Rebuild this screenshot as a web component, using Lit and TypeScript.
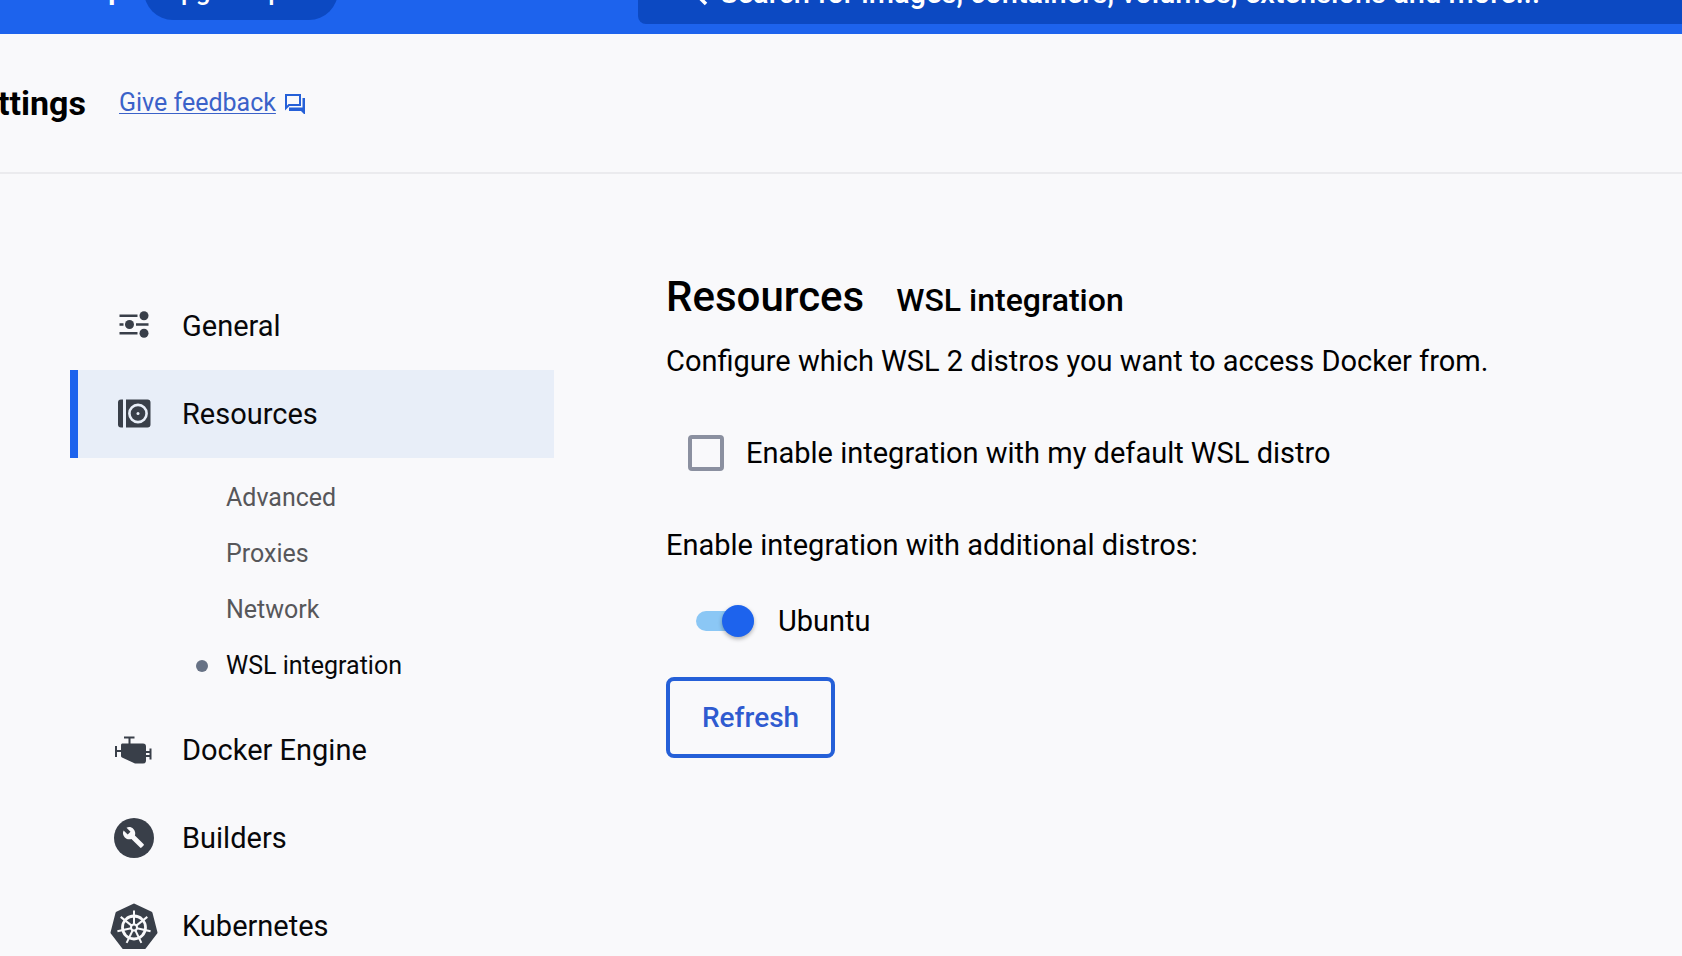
import { LitElement, html, css, svg } from "lit";
import { customElement, state } from "lit/decorators.js";

const spokes = [0, 1, 2, 3, 4, 5, 6].map((i) => (i * 360) / 7);

const icons = {
  general: svg`<svg class="icon" viewBox="0 0 48 48" aria-hidden="true">
    <g stroke="currentColor" stroke-width="2.6" fill="none"><path d="M9.500 13.700h18M9.500 22.500h4M26 22.500h12.500M9.500 31.200h18"/></g>
    <g fill="currentColor"><circle cx="34" cy="13.700" r="4.500"/><circle cx="19.500" cy="22.500" r="4.500"/><circle cx="34" cy="31.200" r="4.500"/></g>
  </svg>`,
  resources: svg`<svg class="icon" viewBox="0 0 48 48" aria-hidden="true">
    <path fill="currentColor" d="M11 9.500h2v28h-2a3 3 0 0 1-3-3v-22a3 3 0 0 1 3-3zM16 9.500h21.500a3 3 0 0 1 3 3v22a3 3 0 0 1-3 3H16z"/>
    <circle cx="28" cy="23.500" r="8.600" fill="none" stroke="#e8eef8" stroke-width="2.600"/>
    <circle cx="28" cy="23.500" r="1.500" fill="#e8eef8"/>
  </svg>`,
  engine: svg`<svg class="icon" viewBox="0 0 48 48" aria-hidden="true">
    <path fill="currentColor" d="M12 17.500h21a3 3 0 0 1 3 3v14a3 3 0 0 1-3 3h-8l-13-6a2 2 0 0 1-1-2v-10a2 2 0 0 1 1-2z"/>
    <path stroke="currentColor" stroke-width="2" fill="none" d="M14 11.500h10.500M19.500 11.500v7M6 20v11M6 25h6M40.500 22.500v11M36 26h4M36 30h4"/>
  </svg>`,
  builders: svg`<svg class="icon" viewBox="0 0 48 48" aria-hidden="true">
    <circle cx="24" cy="24" r="20" fill="currentColor"/>
    <path fill="#f9f9fb" transform="translate(12.500 12.500)" d="M21 17.600 12.400 9C13.200 6.800 12.700 4.200 10.900 2.400 9 .5 6.200.1 4 1.200L8 5.200 5.200 8 1.100 4C-.1 6.200.4 9 2.300 10.900c1.800 1.800 4.400 2.300 6.600 1.500l8.700 8.700c.4.4 1 .4 1.400 0l2.100-2.100c.4-.4.4-1-.1-1.400z"/>
  </svg>`,
  kubernetes: svg`<svg class="icon" viewBox="0 0 48 48" aria-hidden="true">
    <path fill="currentColor" stroke="currentColor" stroke-width="3" stroke-linejoin="round" d="M24 3 41 11 46 30.500 34.500 45.500H13.500L2 30.500 7 11z"/>
    <g stroke="#f9f9fb" fill="none"><circle cx="24" cy="25.500" r="11.500" stroke-width="2.800"/>
    ${spokes.map((a) => svg`<path stroke-width="2" d="M24 22.500V8.500" transform="rotate(${a} 24 25.500)"/>`)}
    <circle cx="24" cy="25.500" r="3" stroke-width="2"/></g>
  </svg>`,
};

@customElement("app-root")
export class AppRoot extends LitElement {
  @state() private defaultDistro = false;
  @state() private ubuntu = true;

  static styles = css`
    :host {
      display: flex;
      flex-direction: column;
      height: 100vh;
      overflow: hidden;
      background: #f9f9fb;
      color: #000;
      font: 400 29px/40px Roboto, sans-serif;
    }
    * { box-sizing: border-box; }
    a { color: inherit; text-decoration: none; }
    h1, h2, h3, p, ul { margin: 0; padding: 0; }
    ul { list-style: none; }

    .topbar {
      flex: none;
      display: flex;
      align-items: flex-end;
      height: 34px;
      overflow: hidden;
      background: #1d63ed;
      color: #fff;
      font-weight: 500;
    }
    .brand {
      flex: none;
      display: flex;
      justify-content: flex-end;
      width: 124px;
      padding-bottom: 24px;
      font-size: 28px;
      font-weight: 700;
      white-space: nowrap;
    }
    .upgrade {
      flex: none;
      width: 194px;
      height: 58px;
      margin: 0 300px 14px 20px;
      padding: 0;
      border: 0;
      border-radius: 29px;
      background: #0c49c2;
      color: inherit;
      font: 500 26px/40px Roboto, sans-serif;
    }
    .search {
      flex: 1;
      display: flex;
      align-items: center;
      gap: 12px;
      height: 62px;
      margin-bottom: 10px;
      padding: 0 0 0 42px;
      border-radius: 8px 0 0 8px;
      background: #0c49c2;
    }
    .search svg { width: 28px; height: 28px; flex: none; }
    .search input {
      flex: 1;
      min-width: 0;
      padding: 0;
      border: 0;
      outline: 0;
      background: none;
      color: #fff;
      font: 500 29px/40px Roboto, sans-serif;
    }
    .search input::placeholder { color: #fff; opacity: 1; }

    .header {
      flex: none;
      display: flex;
      align-items: center;
      gap: 33px;
      height: 140px;
      border-bottom: 2px solid #ebebee;
    }
    .title {
      flex: none;
      display: flex;
      justify-content: flex-end;
      width: 86px;
      overflow: hidden;
      font-size: 34px;
      font-weight: 700;
    }
    .feedback {
      display: flex;
      align-items: center;
      gap: 8px;
      color: #3b62c9;
      font-size: 25px;
    }
    .feedback span { text-decoration: underline; text-underline-offset: 2px; text-decoration-thickness: 1px; }
    .feedback svg { width: 22px; height: 22px; color: #2560d8; }

    .body {
      display: flex;
      align-items: flex-start;
      gap: 112px;
      padding: 108px 70px 0;
    }
    .nav { flex: none; width: 484px; }
    .item {
      display: flex;
      align-items: center;
      gap: 24px;
      height: 88px;
      padding-left: 32px;
      border-left: 8px solid transparent;
      color: #08080a;
    }
    .item.active { border-color: #1d63ed; background: #e8eef8; }
    .icon { flex: none; width: 48px; height: 48px; color: #393f49; }
    .sub { padding: 12px 0; }
    .subitem {
      display: flex;
      align-items: center;
      gap: 18px;
      height: 56px;
      padding-left: 126px;
      color: #57575a;
      font-size: 25px;
    }
    .subitem::before { content: ""; width: 12px; height: 12px; border-radius: 50%; }
    .subitem.active { color: #08080a; }
    .subitem.active::before { background: #677285; }

    .content {
      flex: 1;
      min-width: 0;
      display: flex;
      flex-direction: column;
      align-items: flex-start;
    }
    .heading { display: flex; align-items: baseline; gap: 32px; margin: -9px 0 20px; }
    .heading h2 { font-size: 42px; line-height: 48px; font-weight: 500; }
    .heading h3 { font-size: 32px; line-height: 40px; font-weight: 500; }
    .option { display: flex; align-items: center; padding: 52px 0; padding-left: 22px; gap: 22px; }
    .check {
      appearance: none;
      width: 36px;
      height: 36px;
      margin: 0;
      border: 4px solid #8b90a0;
      border-radius: 4px;
    }
    .check:checked { background: #1d63ed; border-color: #1d63ed; }
    .toggle { display: flex; align-items: center; gap: 24px; padding: 36px 0 36px 30px; }
    .switch {
      appearance: none;
      display: flex;
      align-items: center;
      width: 58px;
      height: 20px;
      margin: 0;
      border-radius: 10px;
      background: #c4c8d0;
    }
    .switch::before {
      content: "";
      width: 32px;
      height: 32px;
      border-radius: 50%;
      background: #fff;
      box-shadow: 0 2px 4px rgba(0, 0, 0, 0.3);
    }
    .switch:checked { justify-content: flex-end; background: #8bc7f5; }
    .switch:checked::before { background: #1d63ed; }
    .refresh {
      height: 81px;
      padding: 0 32px;
      border: 4px solid #2560d8;
      border-radius: 8px;
      background: none;
      color: #2f5bd0;
      font: 500 28px/40px Roboto, sans-serif;
    }
  `;

  private navItem(label: string, icon: unknown, active = false) {
    return html`<a class="item ${active ? "active" : ""}" href="#">${icon}<span>${label}</span></a>`;
  }

  render() {
    return html`
      <header class="topbar">
        <div class="brand">docker desktop</div>
        <button class="upgrade">Upgrade plan</button>
        <label class="search">
          <svg viewBox="0 0 28 28" fill="none" stroke="#fff" stroke-width="3.5" aria-hidden="true">
            <circle cx="10" cy="9" r="7" /><path d="M15 14l11 11" />
          </svg>
          <input type="text" aria-label="Search" placeholder="Search for images, containers, volumes, extensions and more..." />
        </label>
      </header>
      <div class="header">
        <h1 class="title">Settings</h1>
        <a class="feedback" href="#"><span>Give feedback</span>
          <svg viewBox="0 0 22 22" aria-hidden="true">
            <path fill="none" stroke="currentColor" stroke-width="2" d="M2 3h14v10H5l-3 3z" />
            <path fill="currentColor" d="M18.500 6H21v17l-4-4H5v-3.500h13.500z" />
          </svg>
        </a>
      </div>
      <div class="body">
        <nav class="nav">
          ${this.navItem("General", icons.general)}
          ${this.navItem("Resources", icons.resources, true)}
          <ul class="sub">
            ${["Advanced", "Proxies", "Network", "WSL integration"].map(
              (s) => html`<li><a href="#" class="subitem ${s === "WSL integration" ? "active" : ""}">${s}</a></li>`
            )}
          </ul>
          ${this.navItem("Docker Engine", icons.engine)}
          ${this.navItem("Builders", icons.builders)}
          ${this.navItem("Kubernetes", icons.kubernetes)}
        </nav>
        <main class="content">
          <div class="heading"><h2>Resources</h2><h3>WSL integration</h3></div>
          <p>Configure which WSL 2 distros you want to access Docker from.</p>
          <label class="option">
            <input class="check" type="checkbox" .checked=${this.defaultDistro}
              @change=${(e: Event) => (this.defaultDistro = (e.target as HTMLInputElement).checked)} />
            <span>Enable integration with my default WSL distro</span>
          </label>
          <p>Enable integration with additional distros:</p>
          <label class="toggle">
            <input class="switch" type="checkbox" role="switch" .checked=${this.ubuntu}
              @change=${(e: Event) => (this.ubuntu = (e.target as HTMLInputElement).checked)} />
            <span>Ubuntu</span>
          </label>
          <button class="refresh">Refresh</button>
        </main>
      </div>
    `;
  }
}
